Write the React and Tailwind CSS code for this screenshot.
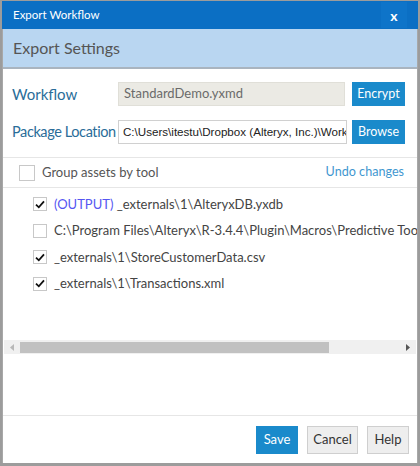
import React from "react";

const files = [
  { checked: true, tag: "(OUTPUT)", path: "_externals\\1\\AlteryxDB.yxdb" },
  { checked: false, path: "C:\\Program Files\\Alteryx\\R-3.4.4\\Plugin\\Macros\\Predictive Tools\\Boosted_Model\\Supporting_Macros" },
  { checked: true, path: "_externals\\1\\StoreCustomerData.csv" },
  { checked: true, path: "_externals\\1\\Transactions.xml" },
];

const Check = ({ checked, className = "" }) => (
  <span
    className={`flex items-center justify-center w-[14px] h-[14px] border border-[#c8c8c8] bg-white shrink-0 ${className}`}
  >
    {checked && (
      <svg width="10" height="9" viewBox="0 0 10 9">
        <path d="M1 4.6 L3.8 7.3 L9 1.3" fill="none" stroke="#111" strokeWidth="1.8" />
      </svg>
    )}
  </span>
);

export default function App() {
  return (
    <div
      className="w-[420px] h-[466px] flex flex-col bg-white border-l-2 border-r-2 border-t border-b-[3px] border-[#9c9c9c] overflow-hidden"
      style={{ fontFamily: 'Lato, "Noto Sans", sans-serif' }}
    >
      {/* title bar */}
      <div className="h-[28px] shrink-0 flex items-center justify-between bg-[#0b6fc4] pl-[11px]">
        <span className="text-[11.5px] text-white">Export Workflow</span>
        <span className="w-[26px] h-[26px] mr-[11px] flex items-center justify-center bg-[#0e74c9] text-white text-[14px] font-bold">
          x
        </span>
      </div>

      <div className="flex-1 flex flex-col border-l border-r border-[#a8a8a8] min-h-0">
        {/* section header */}
        <div className="h-[40px] shrink-0 flex items-center bg-[#b9d6f1] border-b-2 border-[#a9b4bf] pl-[10px]">
          <span className="text-[16px] text-[#555]">Export Settings</span>
        </div>

        {/* form */}
        <div className="flex flex-col gap-[14px] pt-[13px] pl-[9px] pr-[11px]">
          <div className="flex items-center h-[24px]">
            <span className="w-[106px] shrink-0 text-[15px] text-[#2a6d99]">Workflow</span>
            <div className="w-[227px] h-[24px] flex items-center px-[5px] bg-[#ebeae4] border border-[#e0dfd8] text-[13px] text-[#6a6a6a]">
              StandardDemo.yxmd
            </div>
            <button className="ml-[7px] w-[53px] h-[24px] bg-[#1a8acb] text-white text-[12.5px]">Encrypt</button>
          </div>
          <div className="flex items-center h-[24px]">
            <span className="w-[106px] shrink-0 text-[14.5px] tracking-[-0.4px] text-[#2a6d99] whitespace-nowrap">
              Package Location
            </span>
            <div
              className="w-[229px] h-[24px] flex items-center px-[4px] bg-white border border-[#d0d0d0] overflow-hidden whitespace-nowrap text-[11.6px] text-[#222]"
              style={{ fontFamily: '"Liberation Sans", Arial, sans-serif' }}
            >
              C:\Users\itestu\Dropbox (Alteryx, Inc.)\Workspace
            </div>
            <button className="ml-[5px] w-[53px] h-[24px] bg-[#1a8acb] text-white text-[12.5px]">Browse</button>
          </div>
        </div>

        <div className="mt-[13px] border-t border-[#e6e6e6]" />

        <div className="h-[30px] flex items-center justify-between pl-[16px] pr-[13px] border-b border-[#e6e6e6]">
          <div className="flex items-center gap-[7px]">
            <Check checked={false} className="w-[16px] h-[16px]" />
            <span className="text-[13px] text-[#555]">Group assets by tool</span>
          </div>
          <span className="text-[12.6px] text-[#3f97d0]">Undo changes</span>
        </div>

        {/* asset list */}
        <div className="flex-1 flex flex-col min-h-0">
          <div className="h-[152px] flex flex-col pt-[3px] pl-[30px] overflow-hidden">
            {files.map((f, i) => (
              <div key={i} className="h-[26.5px] flex items-center gap-[7px] whitespace-nowrap">
                <Check checked={f.checked} />
                <span className="text-[13px] text-[#444]">
                  {f.tag && <span className="text-[#5656f2]">{f.tag} </span>}
                  {f.path}
                </span>
              </div>
            ))}
          </div>

          {/* horizontal scrollbar */}
          <div className="mx-[1px] h-[14px] flex items-center bg-[#f0f0f0]">
            <span className="w-[16px] flex justify-center">
              <svg width="4" height="7" viewBox="0 0 4 7"><path d="M4 0 L0 3.5 L4 7Z" fill="#b8b8b8" /></svg>
            </span>
            <div className="w-[309px] h-[11px] bg-[#c1c1c1]" />
            <div className="flex-1" />
            <span className="w-[16px] flex justify-center">
              <svg width="4" height="7" viewBox="0 0 4 7"><path d="M0 0 L4 3.5 L0 7Z" fill="#555" /></svg>
            </span>
          </div>

          <div className="flex-1" />
          <div className="border-t border-[#e6e6e6]" />

          {/* buttons */}
          <div className="h-[47px] flex items-center justify-end gap-[9px] pr-[8px]">
            <button className="w-[42px] h-[28px] bg-[#1a8acb] text-white text-[13px]">Save</button>
            <button className="w-[51px] h-[28px] bg-[#eeeeee] border border-[#cfcfcf] text-[#333] text-[13px]">Cancel</button>
            <button className="w-[42px] h-[28px] bg-[#eeeeee] border border-[#cfcfcf] text-[#333] text-[13px]">Help</button>
          </div>
        </div>
      </div>
    </div>
  );
}
